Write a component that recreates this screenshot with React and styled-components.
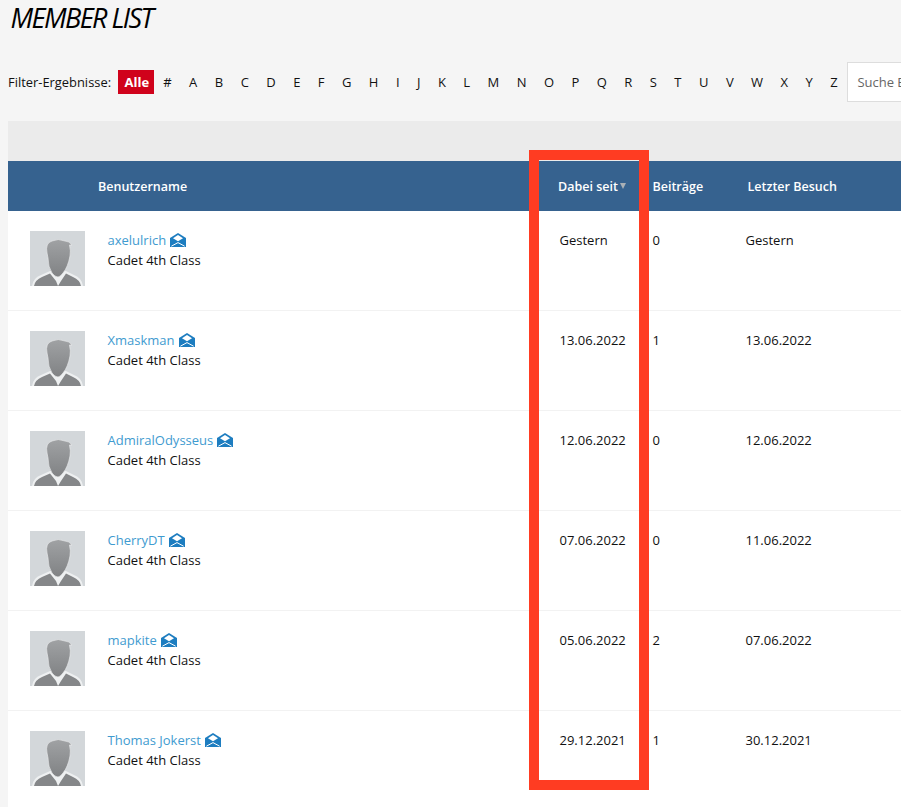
import React from "react";
import styled, { createGlobalStyle } from "styled-components";

const Global = createGlobalStyle`
  html, body { margin: 0; padding: 0; background: #f5f5f5; }
  body { font-family: "Open Sans", "Liberation Sans", sans-serif; font-size: 13px; color: #111; }
`;
const Page = styled.div`
  position: relative; width: 901px; height: 807px; overflow: hidden; background: #f5f5f5;
`;
const Title = styled.h1`
  margin: 0; padding: 3px 0 0 10.5px; height: 40px; font-size: 27px; line-height: 30px;
  font-weight: 400; font-style: italic; letter-spacing: -1.55px; color: #000; text-transform: uppercase;
`;
const FilterBar = styled.div`
  display: flex; align-items: center; height: 40px; margin-top: 19px; padding-left: 8px; white-space: nowrap;
`;
const FilterLabel = styled.span` font-size: 12.9px; margin-right: 6.5px; `;
const AllBtn = styled.a`
  background: #d0021b; color: #fff; font-weight: 700; font-size: 13px; height: 24px; line-height: 24px;
  padding: 0 7px; width: 36px; box-sizing: border-box; margin-right: 1px; text-align: center;
`;
const Letters = styled.div` display: flex; align-items: center; `;
const Letter = styled.a`
  display: block; padding: 0 8.72px; font-size: 13px; line-height: 24px; color: #111;
`;
const Search = styled.div`
  flex: none; width: 200px; height: 40px; box-sizing: border-box; margin-left: 1px; padding-left: 9px;
  border: 1px solid #ddd; background: #fff; color: #666; font-size: 13px; line-height: 38px;
`;
const Table = styled.div` margin: 19px 0 0 8px; width: 960px; background: #fff; `;
const Band = styled.div` height: 40px; background: #ebebeb; `;
const HeadRow = styled.div`
  display: grid; grid-template-columns: 90px 460px 94.5px 95px 1fr; align-items: center; height: 50px;
  background: #36628f; color: #fff; font-weight: 600; font-size: 12.5px;
`;
const Sort = styled.span`
  display: inline-block; width: 0; height: 0; margin-left: 2px; vertical-align: 2px;
  border-left: 3.5px solid transparent; border-right: 3.5px solid transparent; border-top: 6px solid #a9b0b6;
`;
const Row = styled.div`
  display: grid; grid-template-columns: 99.5px 452px 93px 93px 1fr; height: 100px; box-sizing: border-box;
  border-bottom: 1px solid #f2f2f2; padding-top: 19px; font-size: 13px; line-height: 20px;
`;
const AvatarCell = styled.div` padding: 1px 0 0 22px; `;
const NameLine = styled.div` display: flex; align-items: center; gap: 4px; color: #3f9bd0; `;
const Rank = styled.div` color: #111; `;
const Overlay = styled.div`
  position: absolute; left: 529px; top: 150px; width: 120px; height: 640px; box-sizing: border-box;
  border: 10px solid #ff3c22; pointer-events: none;
`;

const Avatar = () => (
  <svg width="55" height="55" viewBox="0 0 55 55" style={{ display: "block" }}>
    <defs>
      <linearGradient id="sil" x1="0" y1="0" x2="0" y2="1">
        <stop offset="0" stopColor="#a0a2a4" />
        <stop offset="1" stopColor="#808284" />
      </linearGradient>
    </defs>
    <rect width="55" height="55" fill="#d3d7da" />
    <path d="M2 55 Q3 47 11 44 L20 40 H36 L44 44 Q52 47 53 55Z" fill="#eef0f1" />
    <path d="M4 55 Q5 49 12 46 L20 42.5 L26 50 L28 55Z M51 55 Q50 49 43 46 L36 42.5 L31 50 L28 55Z" fill="#858789" />
    <path d="M17 22 Q15 12 22 10 Q28 7 35 10 Q39 10 42 14 L39.5 14 Q41 20 40 25 Q38 36 33 42 Q30 46 28 46 Q25 46 22 42 Q18 36 18 27Z" fill="url(#sil)" stroke="#e6e8ea" strokeWidth=".7" />
  </svg>
);
const Mail = () => (
  <svg width="16" height="14" viewBox="0 0 16 14" style={{ display: "block" }}>
    <path d="M0 5 L8 0 L16 5 V14 H0Z" fill="#1d7dc0" />
    <path d="M3 5.2 L8 2 L13 5.2 L8 8.2Z" fill="#fff" />
    <path d="M1.4 13.2 L8 9.6 L14.6 13.2" fill="none" stroke="#fff" strokeWidth="1" />
  </svg>
);

const letters = "#ABCDEFGHIJKLMNOPQRSTUVWXYZ".split("");
const members = [
  ["axelulrich", "Gestern", "0", "Gestern"],
  ["Xmaskman", "13.06.2022", "1", "13.06.2022"],
  ["AdmiralOdysseus", "12.06.2022", "0", "12.06.2022"],
  ["CherryDT", "07.06.2022", "0", "11.06.2022"],
  ["mapkite", "05.06.2022", "2", "07.06.2022"],
  ["Thomas Jokerst", "29.12.2021", "1", "30.12.2021"],
];

export default function App() {
  return (
    <Page>
      <Global />
      <Title>Member List</Title>
      <FilterBar>
        <FilterLabel>Filter-Ergebnisse:</FilterLabel>
        <AllBtn>Alle</AllBtn>
        <Letters>{letters.map((l) => <Letter key={l}>{l}</Letter>)}</Letters>
        <Search>Suche Benutzer</Search>
      </FilterBar>
      <Table>
        <Band />
        <HeadRow>
          <span />
          <span>Benutzername</span>
          <span>Dabei seit<Sort /></span>
          <span>Beiträge</span>
          <span>Letzter Besuch</span>
        </HeadRow>
        {members.map(([name, joined, posts, last]) => (
          <Row key={name}>
            <AvatarCell><Avatar /></AvatarCell>
            <div>
              <NameLine>{name} <Mail /></NameLine>
              <Rank>Cadet 4th Class</Rank>
            </div>
            <div>{joined}</div>
            <div>{posts}</div>
            <div>{last}</div>
          </Row>
        ))}
      </Table>
      <Overlay />
    </Page>
  );
}
